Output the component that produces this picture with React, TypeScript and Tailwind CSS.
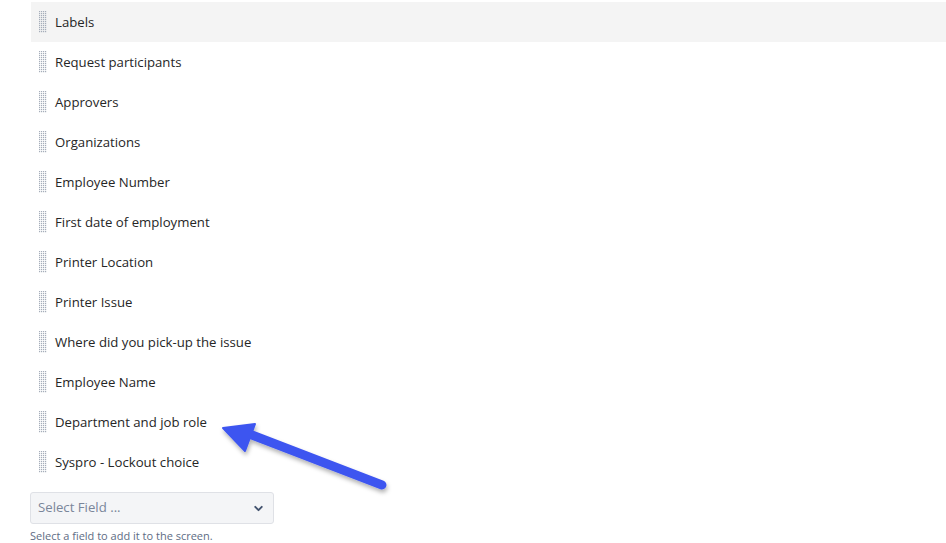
import { ChevronDown } from "lucide-react";

const fields = [
  "Labels",
  "Request participants",
  "Approvers",
  "Organizations",
  "Employee Number",
  "First date of employment",
  "Printer Location",
  "Printer Issue",
  "Where did you pick-up the issue",
  "Employee Name",
  "Department and job role",
  "Syspro - Lockout choice",
];

function DragHandle() {
  const dots = [];
  for (let r = 0; r < 11; r++) {
    for (let c = 0; c < 4; c++) {
      dots.push(<rect key={`${r}-${c}`} x={c * 2} y={r * 2} width="1.2" height="1.2" fill="#a5adba" />);
    }
  }
  return (
    <svg width="8" height="22" viewBox="0 0 8 22" className="shrink-0">
      {dots}
    </svg>
  );
}

function Arrow() {
  return (
    <svg
      className="absolute left-[210px] top-[405px] pointer-events-none"
      width="190"
      height="100"
      viewBox="0 0 190 100"
    >
      <defs>
        <filter id="sh" x="-20%" y="-20%" width="140%" height="160%">
          <feDropShadow dx="1" dy="3" stdDeviation="2" floodColor="#000" floodOpacity="0.3" />
        </filter>
      </defs>
      <g filter="url(#sh)">
        <line x1="172" y1="80" x2="42" y2="30" stroke="#3d55f0" strokeWidth="9" strokeLinecap="round" />
        <polygon points="13,23 45,19 35,46" fill="#3d55f0" stroke="#3d55f0" strokeWidth="2" strokeLinejoin="round" />
      </g>
    </svg>
  );
}

export default function App() {
  return (
    <div className="relative w-[946px] h-[543px] bg-white overflow-hidden font-['Segoe_UI','Open_Sans',sans-serif] text-[#172b4d]">
      <div className="pl-[31px] pt-[2px]">
        {fields.map((f, i) => (
          <div
            key={f}
            className={`flex items-center h-[40px] pl-[8px] gap-[8px] ${i === 0 ? "bg-[#f4f4f4]" : ""}`}
          >
            <DragHandle />
            <span className="pt-[2px] text-[13.2px] text-[#262626]">{f}</span>
          </div>
        ))}
      </div>
      <div className="pl-[30px] mt-[10px]">
        <div className="w-[244px] h-[32px] flex items-center justify-between pl-[7px] pr-[8px] bg-[#f4f5f7] border border-[#dfe1e6] rounded-[3px]">
          <span className="text-[13.2px] text-[#7a869a]">Select Field ...</span>
          <ChevronDown size={13} strokeWidth={3.5} className="text-[#42526e]" />
        </div>
        <p className="mt-[5px] text-[11px] leading-[14px] text-[#5e6c84]">Select a field to add it to the screen.</p>
      </div>
      <Arrow />
    </div>
  );
}
